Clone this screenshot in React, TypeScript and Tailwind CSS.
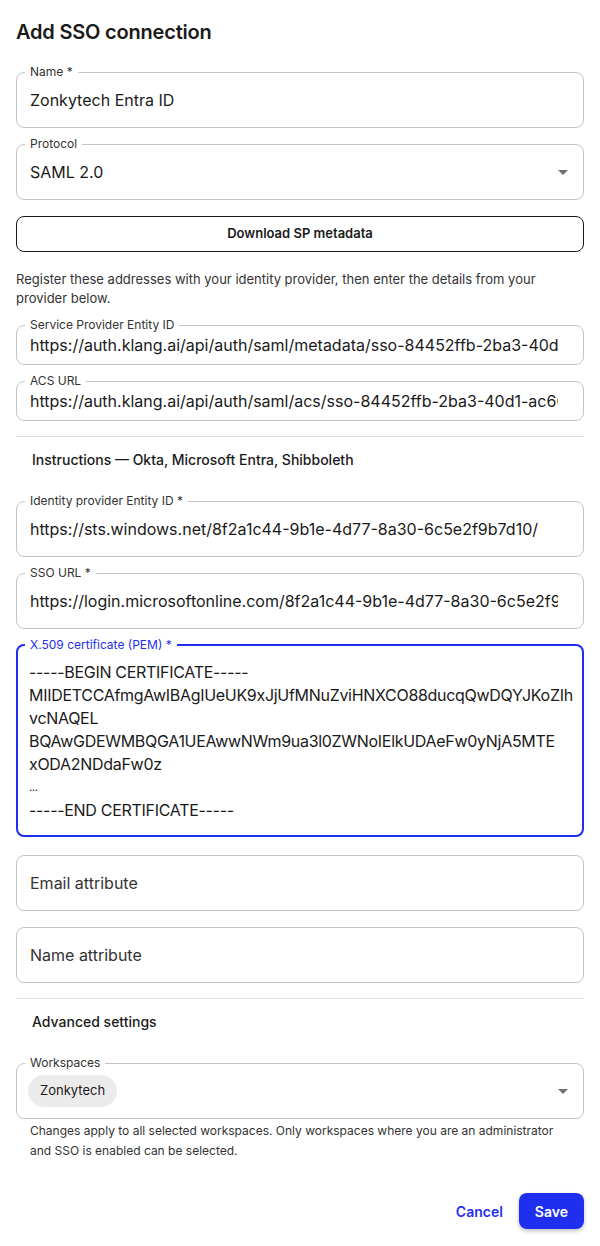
import React from "react";

function Outlined({
  label,
  children,
  height,
  focused,
  className = "",
}: {
  label?: string;
  children: React.ReactNode;
  height: string;
  focused?: boolean;
  className?: string;
}) {
  return (
    <div className={`relative ${height} ${className}`}>
      <fieldset
        className={`pointer-events-none absolute inset-x-0 bottom-0 top-[-6px] m-0 rounded-lg px-2 ${
          focused ? "border-2 border-[#1f2ff0]" : "border border-[#c4c4c4]"
        }`}
      >
        {label ? (
          <legend
            className={`px-[5px] text-[12px] leading-[12px] ${
              focused ? "ml-[-1px] text-[#1f2ff0]" : "text-[#333]"
            }`}
          >
            {label}
          </legend>
        ) : (
          <legend className="h-[12px] w-0 p-0 text-[0px]" />
        )}
      </fieldset>
      <div className="relative h-full">{children}</div>
    </div>
  );
}

function Caret() {
  return (
    <svg width="24" height="24" viewBox="0 0 24 24" className="shrink-0 text-[#707070]" fill="currentColor">
      <path d="M7 10l5 5 5-5z" />
    </svg>
  );
}

export default function App() {
  const certLines = [
    "-----BEGIN CERTIFICATE-----",
    "MIIDETCCAfmgAwIBAgIUeUK9xJjUfMNuZviHNXCO88ducqQwDQYJKoZIh",
    "vcNAQEL",
    "BQAwGDEWMBQGA1UEAwwNWm9ua3l0ZWNoIElkUDAeFw0yNjA5MTE",
    "xODA2NDdaFw0z",
    "...",
    "-----END CERTIFICATE-----",
  ];
  return (
    <div
      className="flex min-h-[1246px] w-[600px] flex-col bg-white px-4 text-[#1a1a1a]"
      style={{ fontFamily: "Inter, 'Noto Sans', sans-serif" }}
    >
      <h1 className="mt-[18px] h-7 text-[20px] font-semibold leading-7 tracking-[-0.2px] text-[#1a1a1a]">
        Add SSO connection
      </h1>

      <Outlined label="Name *" height="h-14" className="mt-[26px]">
        <div className="flex h-full items-center px-[14px] text-[16px]">Zonkytech Entra ID</div>
      </Outlined>

      <Outlined label="Protocol" height="h-14" className="mt-4">
        <div className="flex h-full items-center justify-between pl-[14px] pr-[9px] text-[16px]">
          <span>SAML 2.0</span>
          <Caret />
        </div>
      </Outlined>

      <button className="mt-4 h-9 rounded-lg border border-[#1a1a1a] text-[13px] font-semibold text-[#1a1a1a]">
        Download SP metadata
      </button>

      <p className="mt-[18px] text-[13px] leading-[19px] text-[#333]">
        Register these addresses with your identity provider, then enter the details from your
        provider below.
      </p>

      <Outlined label="Service Provider Entity ID" height="h-10" className="mt-[17px]">
        <div className="flex h-full items-center overflow-hidden whitespace-nowrap pl-[14px] pr-[26px] text-[16px]">
          <span className="block overflow-hidden">
            https://auth.klang.ai/api/auth/saml/metadata/sso-84452ffb-2ba3-40d1-ac60-1f3e9b7c2d10
          </span>
        </div>
      </Outlined>

      <Outlined label="ACS URL" height="h-10" className="mt-4">
        <div className="flex h-full items-center overflow-hidden whitespace-nowrap pl-[14px] pr-[26px] text-[16px]">
          <span className="block overflow-hidden">
            https://auth.klang.ai/api/auth/saml/acs/sso-84452ffb-2ba3-40d1-ac60-1f3e9b7c2d10
          </span>
        </div>
      </Outlined>

      <div className="mt-[15px] h-px bg-[#e0e0e0]" />

      <h2 className="mt-[13px] px-4 text-[14px] font-medium leading-5 text-[#1a1a1a]">
        Instructions — Okta, Microsoft Entra, Shibboleth
      </h2>

      <Outlined label="Identity provider Entity ID *" height="h-14" className="mt-[31px]">
        <div className="flex h-full items-center overflow-hidden whitespace-nowrap pl-[14px] pr-[26px] text-[16px]">
          <span className="block overflow-hidden">
            https://sts.windows.net/8f2a1c44-9b1e-4d77-8a30-6c5e2f9b7d10/
          </span>
        </div>
      </Outlined>

      <Outlined label="SSO URL *" height="h-14" className="mt-4">
        <div className="flex h-full items-center overflow-hidden whitespace-nowrap pl-[14px] pr-[26px] text-[16px]">
          <span className="block overflow-hidden">
            https://login.microsoftonline.com/8f2a1c44-9b1e-4d77-8a30-6c5e2f9b7d10/saml2
          </span>
        </div>
      </Outlined>

      <Outlined label="X.509 certificate (PEM) *" height="h-[192px]" focused className="mt-4">
        <div className="overflow-hidden px-[13px] pt-[16px] text-[16px] leading-[23px] tracking-[-0.3px] whitespace-nowrap">
          {certLines.map((l, i) => (
            <div key={i} className={l === "..." ? "text-[11px]" : ""}>
              {l}
            </div>
          ))}
        </div>
      </Outlined>

      <Outlined height="h-14" className="mt-[18px]">
        <div className="flex h-full items-center px-[14px] text-[16px] text-[#333]">Email attribute</div>
      </Outlined>

      <Outlined height="h-14" className="mt-4">
        <div className="flex h-full items-center px-[14px] text-[16px] text-[#333]">Name attribute</div>
      </Outlined>

      <div className="mt-[15px] h-px bg-[#e0e0e0]" />

      <h2 className="mt-[13px] px-4 text-[14px] font-medium leading-5 text-[#1a1a1a]">
        Advanced settings
      </h2>

      <Outlined label="Workspaces" height="h-14" className="mt-[31px]">
        <div className="flex h-full items-center justify-between pl-[12px] pr-[9px]">
          <span className="flex h-8 items-center rounded-full bg-[#ebebeb] px-3 text-[13px] text-[#1a1a1a]">
            Zonkytech
          </span>
          <Caret />
        </div>
      </Outlined>

      <p className="mt-[2px] px-[14px] text-[12px] leading-5 text-[#333]">
        Changes apply to all selected workspaces. Only workspaces where you are an administrator
        and SSO is enabled can be selected.
      </p>

      <div className="mt-8 flex items-center justify-end gap-2">
        <button className="h-9 px-2 text-[14px] font-semibold text-[#1f2ff0]">Cancel</button>
        <button className="h-9 rounded-lg bg-[#1f2ff0] px-4 text-[14px] font-semibold text-white shadow-[0_2px_4px_rgba(0,0,0,0.25)]">
          Save
        </button>
      </div>
    </div>
  );
}
